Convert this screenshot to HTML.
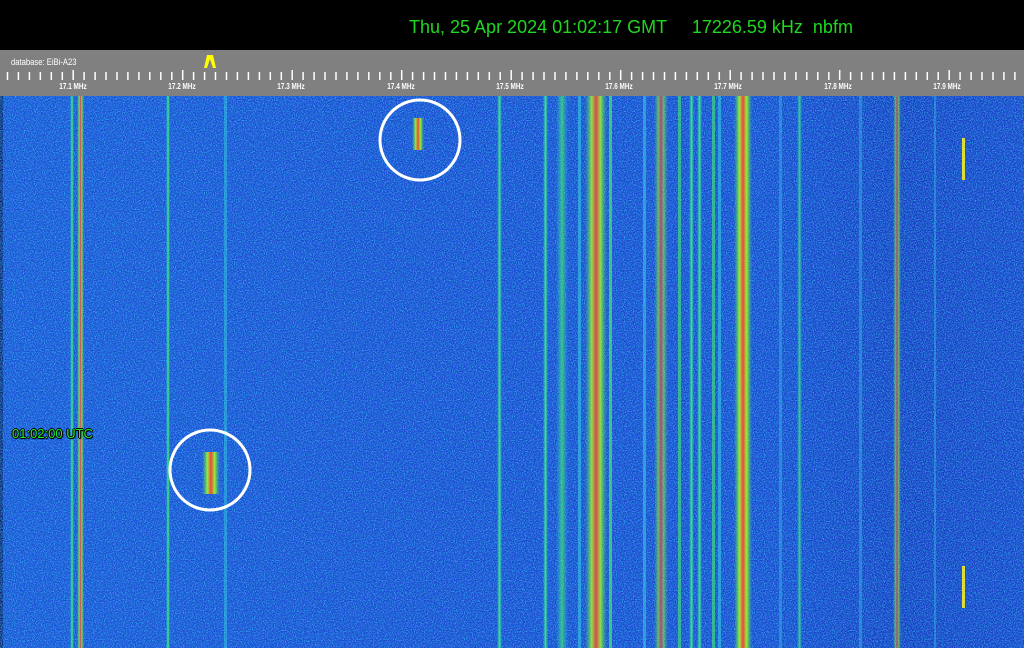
<!DOCTYPE html>
<html><head><meta charset="utf-8"><style>
html,body{margin:0;padding:0;background:#000;width:1024px;height:648px;overflow:hidden;font-family:"Liberation Sans",sans-serif}
#top{position:absolute;left:0;top:0;width:1024px;height:50px;background:#000}
#hdr{position:absolute;left:409px;top:17px;color:#1fd81f;font-size:18px;white-space:pre}
#bar{position:absolute;left:0;top:50px;width:1024px;height:46px;background:#808080}
#db{position:absolute;left:11px;top:57px;color:#fff;font-size:9px;transform:scaleX(.85);transform-origin:left}
.lbl{position:absolute;top:82px;color:#fff;font-size:8px;font-weight:bold;transform:translateX(-50%) scaleX(.8)}
#utc{position:absolute;left:12px;top:426px;color:#2e2;font-size:13px;text-shadow:1px 0 0 #000,-1px 0 0 #000,0 1px 0 #000,0 -1px 0 #000,1px 1px 1px #000}
</style></head><body>
<div id="top"></div>
<div id="hdr">Thu, 25 Apr 2024 01:02:17 GMT     17226.59 kHz  nbfm</div>
<div id="bar"></div>
<div id="db">database: EiBi-A23</div>
<svg style="position:absolute;left:0;top:50px" width="1024" height="46">
<g id="ticks" stroke="#fff" stroke-width="1.5"></g>
<path d="M204 18 L207 5 L213 5 L216 18 L213 18 L210 9 L207 18Z" fill="#ff0"/>
</svg>
<div class="lbl" style="left:73px">17.1 MHz</div>
<div class="lbl" style="left:182px">17.2 MHz</div>
<div class="lbl" style="left:291px">17.3 MHz</div>
<div class="lbl" style="left:401px">17.4 MHz</div>
<div class="lbl" style="left:510px">17.5 MHz</div>
<div class="lbl" style="left:619px">17.6 MHz</div>
<div class="lbl" style="left:728px">17.7 MHz</div>
<div class="lbl" style="left:838px">17.8 MHz</div>
<div class="lbl" style="left:947px">17.9 MHz</div>
<svg style="position:absolute;left:0;top:96px" width="1024" height="552">
<defs>
<filter id="n" x="0" y="0" width="100%" height="100%">
<feTurbulence type="fractalNoise" baseFrequency="0.9" numOctaves="1" seed="3"/>
<feColorMatrix type="matrix" values="0 0 0 0 0.05  0 0 0 0 0.7  0 0 0 0 1  0 0 0 4 -1.6"/>
</filter>
<filter id="d" x="0" y="0" width="100%" height="100%">
<feTurbulence type="fractalNoise" baseFrequency="0.9" numOctaves="1" seed="9"/>
<feColorMatrix type="matrix" values="0 0 0 0 0.02  0 0 0 0 0.08  0 0 0 0 0.5  0 0 0 4 -1.6"/>
</filter>
<linearGradient id="bg" x1="0" x2="1">
<stop offset="0" stop-color="#1b50e0"/><stop offset="0.45" stop-color="#1a44d8"/><stop offset="0.75" stop-color="#1942d6"/><stop offset="0.88" stop-color="#1632c4"/><stop offset="1" stop-color="#183ace"/>
</linearGradient>
<linearGradient id="yl" x1="0" x2="1"><stop offset="0" stop-color="#3c6" stop-opacity="0"/><stop offset="0.3" stop-color="#9e3"/><stop offset="0.5" stop-color="#e44"/><stop offset="0.7" stop-color="#9e3"/><stop offset="1" stop-color="#3c6" stop-opacity="0"/></linearGradient>
<linearGradient id="gl" x1="0" x2="1"><stop offset="0" stop-color="#2cc" stop-opacity="0"/><stop offset="0.5" stop-color="#4e6"/><stop offset="1" stop-color="#2cc" stop-opacity="0"/></linearGradient>
</defs>
<rect width="1024" height="552" fill="url(#bg)"/>
<rect x="0" width="3" height="552" fill="#0a1a60"/>
<rect width="1024" height="552" filter="url(#n)" opacity="0.6"/>
<rect width="1024" height="552" filter="url(#d)" opacity="0.6"/>
<g>
<rect x="70" width="4" height="552" fill="url(#gl)"/>
<rect x="77" width="7" height="552" fill="url(#yl)" opacity=".85"/>
<rect x="166" width="4" height="552" fill="url(#gl)"/>
<rect x="224" width="3" height="552" fill="#3cd" opacity=".5"/>
<rect x="497" width="5" height="552" fill="url(#gl)"/>
<rect x="543" width="5" height="552" fill="url(#gl)"/>
<rect x="556" width="12" height="552" fill="url(#gl)" opacity=".7"/>
<rect x="578" width="3" height="552" fill="#3cd" opacity=".6"/>
<rect x="585" width="22" height="552" fill="url(#yl)" opacity=".9"/>
<rect x="609" width="3" height="552" fill="#4e6" opacity=".7"/>
<rect x="643" width="3" height="552" fill="#3cd" opacity=".6"/>
<rect x="654" width="14" height="552" fill="url(#yl)" opacity=".6"/>
<rect x="678" width="3" height="552" fill="#4e6" opacity=".6"/>
<rect x="689" width="5" height="552" fill="url(#gl)"/>
<rect x="697" width="5" height="552" fill="url(#gl)"/>
<rect x="712" width="3" height="552" fill="#4e6" opacity=".6"/>
<rect x="718" width="3" height="552" fill="#3cd" opacity=".6"/>
<rect x="734" width="18" height="552" fill="url(#yl)"/>
<rect x="779" width="3" height="552" fill="#3cd" opacity=".4"/>
<rect x="797" width="5" height="552" fill="url(#gl)" opacity=".8"/>
<rect x="859" width="3" height="552" fill="#3cd" opacity=".4"/>
<rect x="893" width="8" height="552" fill="url(#yl)" opacity=".6"/>
<rect x="934" width="2" height="552" fill="#3cd" opacity=".4"/>
<rect x="962" y="42" width="3" height="42" fill="#dd3"/>
<rect x="962" y="470" width="3" height="42" fill="#dd3"/>
<rect x="412" y="22" width="12" height="32" fill="url(#yl)"/>
<rect x="202" y="356" width="18" height="42" fill="url(#yl)"/>
</g>
<circle cx="420" cy="44" r="40" fill="none" stroke="#fff" stroke-width="3"/>
<circle cx="210" cy="374" r="40" fill="none" stroke="#fff" stroke-width="3"/>
</svg>
<div id="utc">01:02:00 UTC</div>
<script>
var g=document.getElementById('ticks'),s='';
for(var i=0;i<95;i++){var x=7.5+i*10.95;var big=Math.abs(((x-73)/109.5)-Math.round((x-73)/109.5))<0.05;
s+='<line x1="'+x.toFixed(1)+'" x2="'+x.toFixed(1)+'" y1="'+(big?20:22)+'" y2="30"/>';}
g.innerHTML=s;
</script>
</body></html>
